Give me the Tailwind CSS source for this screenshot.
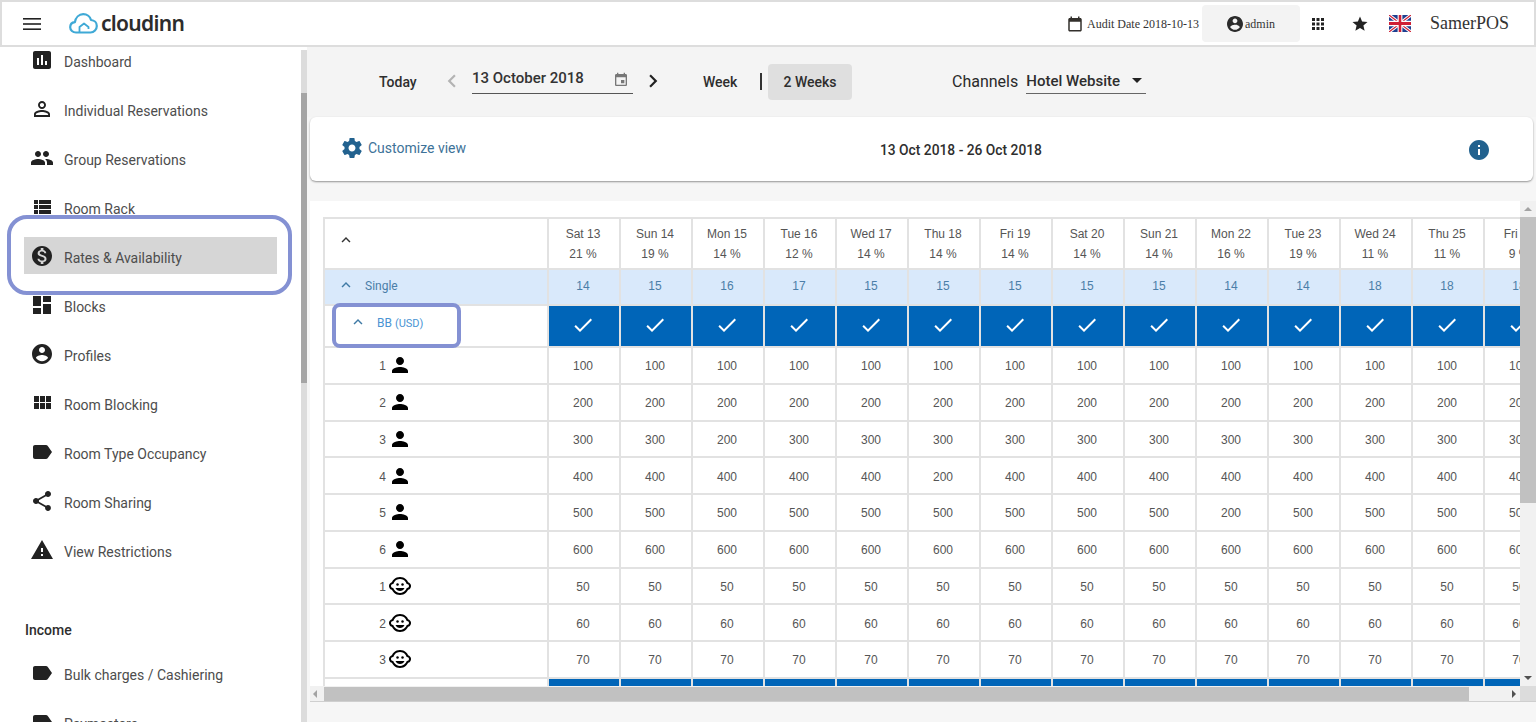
<!DOCTYPE html>
<html lang="en">
<head>
  <meta charset="UTF-8" />
  <meta name="viewport" content="width=device-width, initial-scale=1.0"/>
  <title>Rates &amp; Availability</title>
  <script src="https://cdn.jsdelivr.net/npm/@tailwindcss/browser@4"></script>
</head>
<body class="h-screen overflow-hidden flex flex-col bg-white font-['Roboto',sans-serif]">

  <!-- top bar -->
  <header class="h-[47px] shrink-0 flex items-center border-2 border-[#dddddd] border-b-2 bg-white">
    <svg class="ml-[21px] w-[18px] h-[12px]" viewBox="0 0 18 12" fill="#222"><rect width="18" height="1.6"/><rect y="5.2" width="18" height="1.6"/><rect y="10.4" width="18" height="1.6"/></svg>
    <div class="ml-[28px] flex items-center">
      <svg class="w-[29px] h-[21px]" viewBox="0 0 29 21" fill="none" stroke="#3fa9d6" stroke-width="2.2" stroke-linejoin="round"><path d="M7 19.5c-3.2 0-5.8-2.3-5.8-5.2 0-2.7 2-4.8 4.7-5.1C6.600 4.500 10 1.200 14.200 1.200c3.800 0 7 2.500 7.800 5.800 3.300.2 5.800 2.800 5.800 6 0 3.500-2.800 6.500-6.300 6.500z"/><path d="M10.500 19v-5l4.500-3.500 4.500 3.500v2" stroke-width="1.800"/></svg>
      <span class="ml-[3px] text-[21px] leading-none font-semibold tracking-[-0.7px] text-[#2c2c2c] font-['Noto_Sans',sans-serif]">cloudinn</span>
    </div>
    <div class="ml-auto flex items-center font-['Liberation_Serif',serif] text-[#333]">
      <svg class="w-[18px] h-[18px] mr-[3px]" viewBox="0 0 24 24" fill="#33302c"><path d="M19 4h-1V2h-2v2H8V2H6v2H5c-1.110 0-1.990.9-1.990 2L3 20c0 1.100.89 2 2 2h14c1.100 0 2-.9 2-2V6c0-1.100-.9-2-2-2zm0 16H5V9h14v11z"/></svg>
      <span class="text-[12px] w-[111px] whitespace-nowrap">Audit Date 2018-10-13</span>
      <div class="ml-[4px] w-[98px] h-[37px] bg-[#f3f3f3] rounded-[4px] flex items-center pl-[25px] text-[12px]">
        <svg class="w-[16px] h-[16px] mr-[2px]" viewBox="2 2 20 20" fill="#2b2b2b"><path d="M12 2C6.480 2 2 6.480 2 12s4.480 10 10 10 10-4.480 10-10S17.520 2 12 2zm0 3c1.660 0 3 1.340 3 3s-1.340 3-3 3-3-1.340-3-3 1.340-3 3-3zm0 14.200c-2.500 0-4.710-1.280-6-3.220.03-1.990 4-3.080 6-3.080 1.990 0 5.970 1.090 6 3.080-1.290 1.940-3.500 3.220-6 3.220z"/></svg>
        admin
      </div>
      <svg class="ml-[9px] w-[18px] h-[18px]" viewBox="0 0 24 24" fill="#222"><path d="M4 8h4V4H4v4zm6 12h4v-4h-4v4zm-6 0h4v-4H4v4zm0-6h4v-4H4v4zm6 0h4v-4h-4v4zm6-10v4h4V4h-4zm-6 4h4V4h-4v4zm6 6h4v-4h-4v4zm0 6h4v-4h-4v4z"/></svg>
      <svg class="ml-[24px] w-[18px] h-[18px]" viewBox="0 0 24 24" fill="#222"><path d="M12 17.270L18.180 21l-1.640-7.030L22 9.240l-7.190-.61L12 2 9.190 8.630 2 9.240l5.460 4.730L5.820 21z"/></svg>
      <svg class="ml-[20px] w-[22px] h-[17px]" viewBox="0 0 60 40" preserveAspectRatio="none">
        <rect width="60" height="40" fill="#1f3f8f"/>
        <path d="M0 0L60 40M60 0L0 40" stroke="#fff" stroke-width="8"/>
        <path d="M0 0L60 40M60 0L0 40" stroke="#cf1f35" stroke-width="3"/>
        <path d="M30 0V40M0 20H60" stroke="#fff" stroke-width="13"/>
        <path d="M30 0V40M0 20H60" stroke="#cf1f35" stroke-width="7"/>
      </svg>
      <span class="ml-[19px] mr-[25px] w-[79px] text-[18px] whitespace-nowrap text-[#333]">SamerPOS</span>
    </div>
  </header>

  <div class="flex flex-1 min-h-0">
    <!-- side menu -->
    <aside class="w-[307px] shrink-0 flex bg-white overflow-hidden">
      <nav id="menu" class="w-[301px] shrink-0 relative pl-[24px] text-[14px] text-[#4d4d4d]"></nav>
      <div class="w-[6px] mt-[3px] bg-[#dcdcdc]">
        <div class="mt-[43px] h-[290px] bg-[#a5a5a5]"></div>
      </div>
    </aside>

    <main class="flex-1 min-w-0 bg-[#f6f6f6] flex flex-col">
      <!-- date toolbar -->
      <div class="h-[70px] shrink-0 bg-[#f4f4f4] flex items-start text-[14px] text-[#2e2e2e] font-medium">
        <span class="ml-[72px] mt-[25px] w-[38px]">Today</span>
        <svg class="ml-[22px] mt-[21px] w-[26px] h-[26px]" viewBox="0 0 24 24" fill="#b3b3b3"><path d="M15.410 7.410L14 6l-6 6 6 6 1.410-1.410L10.830 12z"/></svg>
        <div class="ml-[7px] mt-[21px] w-[161px] h-[26px] border-b border-[#555] flex justify-between text-[#333]">
          <span class="font-medium text-[15px] leading-[21px]">13 October 2018</span>
          <svg class="mr-[4px] mt-[4px] w-[16px] h-[16px]" viewBox="0 0 24 24" fill="#777"><path d="M17 12h-5v5h5v-5zM16 1v2H8V1H6v2H5c-1.110 0-1.990.9-1.990 2L3 19c0 1.100.89 2 2 2h14c1.100 0 2-.9 2-2V5c0-1.100-.9-2-2-2h-1V1h-2zm3 18H5V8h14v11z"/></svg>
        </div>
        <svg class="ml-[7px] mt-[21px] w-[26px] h-[26px]" viewBox="0 0 24 24" fill="#222"><path d="M10 6L8.590 7.410 13.170 12l-4.580 4.590L10 18l6-6z"/></svg>
        <span class="ml-[37px] mt-[25px] w-[36px]">Week</span>
        <span class="ml-[21px] mt-[26px] w-[2px] h-[17px] bg-[#333]"></span>
        <span class="ml-[6px] mt-[17px] w-[84px] h-[36px] rounded-[4px] bg-[#dfdfdf] flex items-center justify-center">2 Weeks</span>
        <span class="ml-[100px] mt-[23px] text-[16px] font-normal text-[#2a2a2a]">Channels</span>
        <div class="ml-[8px] mt-[24px] w-[120px] h-[23px] border-b border-[#666] flex justify-between text-[15px] font-medium">
          <span class="leading-[20px]">Hotel Website</span>
          <span class="mt-[7px] mr-[4px] w-0 h-0 border-x-[5px] border-x-transparent border-t-[5px] border-t-[#222]"></span>
        </div>
      </div>

      <!-- card -->
      <div class="ml-[3px] mr-[3px] h-[64px] shrink-0 bg-white rounded-[6px] shadow-[0_1px_2px_rgba(0,0,0,0.4)] flex items-center relative">
        <svg class="ml-[30px] -mt-[3px] w-[24px] h-[24px]" viewBox="0 0 24 24" fill="#22628f"><path d="M19.430 12.980c.04-.32.07-.64.07-.98s-.03-.66-.07-.98l2.110-1.650c.19-.15.24-.42.12-.64l-2-3.460c-.12-.22-.39-.3-.61-.22l-2.490 1c-.52-.4-1.080-.73-1.690-.98l-.38-2.650C14.460 2.180 14.250 2 14 2h-4c-.25 0-.46.18-.49.42l-.38 2.650c-.61.25-1.170.59-1.690.98l-2.490-1c-.23-.09-.49 0-.61.22l-2 3.460c-.13.22-.07.49.12.64l2.110 1.650c-.04.32-.07.65-.07.98s.03.66.07.98l-2.110 1.650c-.19.15-.24.42-.12.64l2 3.460c.12.22.39.3.61.22l2.490-1c.52.4 1.080.73 1.690.98l.38 2.650c.03.24.24.42.49.42h4c.25 0 .46-.18.49-.42l.38-2.650c.61-.25 1.170-.59 1.690-.98l2.490 1c.23.09.49 0 .61-.22l2-3.460c.12-.22.07-.49-.12-.64l-2.110-1.650zM12 15.500c-1.930 0-3.500-1.570-3.500-3.500s1.570-3.500 3.500-3.500 3.500 1.570 3.500 3.500-1.570 3.500-3.500 3.500z"/></svg>
        <span class="ml-[4px] -mt-[1px] text-[14px] text-[#3d7298]">Customize view</span>
        <span class="absolute left-[570px] top-[25px] text-[13.8px] leading-[17px] font-medium text-[#2e2e2e]">13 Oct 2018 - 26 Oct 2018</span>
        <svg class="absolute right-[42px] top-[21px] w-[24px] h-[24px]" viewBox="0 0 24 24" fill="#22628f"><path d="M12 2C6.480 2 2 6.480 2 12s4.480 10 10 10 10-4.480 10-10S17.520 2 12 2zm1 15h-2v-6h2v6zm0-8h-2V7h2v2z"/></svg>
      </div>

      <!-- rates grid with its scrollbars -->
      <div class="mt-[20px] ml-[3px] w-[1226px] h-[501px] flex shrink-0 border-b border-[#cfcfcf]">
        <div class="w-[1210px] flex flex-col">
          <div class="h-[485px] bg-white overflow-hidden pl-[13px] pt-[16px]">
            <div id="grid" class="w-max border-t-2 border-l-2 border-[#e2e2e2] font-['Liberation_Sans',sans-serif] text-[12px] text-[#555]"></div>
          </div>
          <div class="h-[15px] bg-[#f1f1f1] flex items-center relative">
            <span class="ml-[3px] w-0 h-0 border-y-[4px] border-y-transparent border-r-[4px] border-r-[#a3a3a3]"></span>
            <div class="absolute left-[14px] top-[1px] w-[1145px] h-[14px] bg-[#c1c1c1]"></div>
            <span class="ml-auto mr-[4px] w-0 h-0 border-y-[4px] border-y-transparent border-l-[4px] border-l-[#505050]"></span>
          </div>
        </div>
        <div class="w-[16px] flex flex-col bg-[#f1f1f1]">
          <div class="h-[16px] flex items-center justify-center">
            <span class="w-0 h-0 border-x-[4px] border-x-transparent border-b-[4px] border-b-[#a3a3a3]"></span>
          </div>
          <div class="h-[286px] bg-[#c1c1c1]"></div>
          <div class="h-[183px] flex items-end justify-center pb-[6px]">
            <span class="w-0 h-0 border-x-[4px] border-x-transparent border-t-[4px] border-t-[#505050]"></span>
          </div>
          <div class="h-[15px] bg-[#dcdcdc]"></div>
        </div>
      </div>
    </main>
  </div>

  <!-- callouts drawn over the page -->
  <div class="absolute left-[7px] top-[215px] w-[285px] h-[80px] rounded-[20px] border-[4px] border-[#8491d3]"></div>
  <div class="absolute left-[332px] top-[303px] w-[129px] h-[45px] rounded-[8px] border-[4px] border-[#8491d3]"></div>

  <script>
    const paths = {
      poll: '<path d="M19 3H5c-1.100 0-2 .9-2 2v14c0 1.100.9 2 2 2h14c1.100 0 2-.9 2-2V5c0-1.100-.9-2-2-2zM9 17H7v-7h2v7zm4 0h-2V7h2v10zm4 0h-2v-4h2v4z"/>',
      personOutline: '<path d="M12 5.900c1.160 0 2.100.94 2.100 2.100s-.94 2.100-2.100 2.100S9.900 9.160 9.900 8s.94-2.100 2.100-2.100m0 9c2.970 0 6.100 1.460 6.100 2.100v1.100H5.900V17c0-.64 3.130-2.100 6.100-2.100M12 4C9.790 4 8 5.790 8 8s1.790 4 4 4 4-1.790 4-4-1.790-4-4-4zm0 9c-2.670 0-8 1.340-8 4v3h16v-3c0-2.660-5.330-4-8-4z"/>',
      people: '<path d="M16 11c1.660 0 2.990-1.340 2.990-3S17.660 5 16 5c-1.660 0-3 1.340-3 3s1.340 3 3 3zm-8 0c1.660 0 2.990-1.340 2.990-3S9.660 5 8 5C6.340 5 5 6.340 5 8s1.340 3 3 3zm0 2c-2.330 0-7 1.170-7 3.500V19h14v-2.500c0-2.330-4.670-3.500-7-3.500zm8 0c-.29 0-.62.02-.97.05 1.160.84 1.970 1.970 1.970 3.450V19h6v-2.500c0-2.330-4.670-3.500-7-3.500z"/>',
      viewList: '<path d="M4 14h4v-4H4v4zm0 5h4v-4H4v4zM4 9h4V5H4v4zm5 5h12v-4H9v4zm0 5h12v-4H9v4zM9 5v4h12V5H9z"/>',
      money: '<path d="M12 2C6.480 2 2 6.480 2 12s4.480 10 10 10 10-4.480 10-10S17.520 2 12 2zm1.410 16.090V20h-2.670v-1.930c-1.710-.36-3.160-1.460-3.270-3.400h1.960c.1 1.050.82 1.870 2.650 1.870 1.960 0 2.400-.98 2.400-1.590 0-.83-.44-1.610-2.670-2.140-2.480-.6-4.180-1.620-4.180-3.670 0-1.720 1.390-2.840 3.110-3.210V4h2.670v1.950c1.860.45 2.790 1.860 2.850 3.390H14.300c-.05-1.110-.64-1.870-2.220-1.870-1.500 0-2.400.68-2.400 1.640 0 .84.65 1.390 2.670 1.910s4.180 1.390 4.180 3.910c-.01 1.830-1.380 2.830-3.120 3.160z"/>',
      dashboard: '<path d="M3 13h8V3H3v10zm0 8h8v-6H3v6zm10 0h8V11h-8v10zm0-18v6h8V3h-8z"/>',
      account: '<path d="M12 2C6.480 2 2 6.480 2 12s4.480 10 10 10 10-4.480 10-10S17.520 2 12 2zm0 3c1.660 0 3 1.340 3 3s-1.340 3-3 3-3-1.340-3-3 1.340-3 3-3zm0 14.200c-2.500 0-4.710-1.280-6-3.220.03-1.990 4-3.080 6-3.080 1.990 0 5.970 1.090 6 3.080-1.290 1.940-3.500 3.220-6 3.220z"/>',
      viewModule: '<path d="M4 11h5V5H4v6zm0 7h5v-6H4v6zm6 0h5v-6h-5v6zm6 0h5v-6h-5v6zm-6-7h5V5h-5v6zm6-6v6h5V5h-5z"/>',
      label: '<path d="M17.630 5.840C17.270 5.330 16.670 5 16 5L5 5.010C3.900 5.010 3 5.900 3 7v10c0 1.100.9 1.990 2 1.990L16 19c.67 0 1.270-.33 1.630-.84L22 12l-4.370-6.160z"/>',
      share: '<path d="M18 16.080c-.76 0-1.440.3-1.960.77L8.910 12.700c.05-.23.09-.46.09-.7s-.04-.47-.09-.7l7.050-4.110c.54.5 1.250.81 2.040.81 1.660 0 3-1.340 3-3s-1.340-3-3-3-3 1.340-3 3c0 .24.04.47.09.7L8.040 9.810C7.500 9.310 6.790 9 6 9c-1.660 0-3 1.340-3 3s1.340 3 3 3c.79 0 1.500-.31 2.040-.81l7.120 4.160c-.05.21-.08.43-.08.65 0 1.610 1.310 2.920 2.920 2.920 1.610 0 2.920-1.310 2.920-2.920s-1.310-2.920-2.920-2.920z"/>',
      warning: '<path d="M1 21h22L12 2 1 21zm12-3h-2v-2h2v2zm0-4h-2v-4h2v4z"/>',
      person: '<path d="M12 12c2.210 0 4-1.790 4-4s-1.790-4-4-4-4 1.790-4 4 1.790 4 4 4zm0 2c-2.670 0-8 1.340-8 4v2h16v-2c0-2.660-5.330-4-8-4z"/>',
      child: '<circle cx="14.500" cy="10.500" r="1.250"/><circle cx="9.500" cy="10.500" r="1.250"/><path d="M22.940 12.660c.04-.21.06-.43.06-.66s-.02-.45-.06-.66c-.25-1.510-1.360-2.740-2.810-3.170-.53-1.120-1.280-2.100-2.190-2.910C16.360 3.850 14.280 3 12 3s-4.360.85-5.940 2.260c-.92.81-1.670 1.800-2.190 2.910-1.450.43-2.560 1.650-2.810 3.170-.04.21-.06.43-.06.66s.02.45.06.66c.25 1.510 1.360 2.740 2.810 3.170.52 1.110 1.270 2.090 2.170 2.890C7.620 20.140 9.710 21 12 21s4.380-.86 5.970-2.280c.9-.8 1.650-1.790 2.170-2.890 1.440-.43 2.550-1.650 2.800-3.170zM19 14c-.1 0-.19-.02-.29-.03-.2.67-.49 1.290-.86 1.860C16.600 17.740 14.450 19 12 19s-4.600-1.260-5.850-3.170c-.37-.57-.66-1.190-.86-1.860-.1.01-.19.03-.29.03-1.100 0-2-.9-2-2s.9-2 2-2c.1 0 .19.02.29.03.2-.67.49-1.290.86-1.860C7.400 6.260 9.550 5 12 5s4.600 1.260 5.850 3.170c.37.57.66 1.190.86 1.860.1-.01.19-.03.29-.03 1.100 0 2 .9 2 2s-.9 2-2 2z"/><path d="M7.500 14c.76 1.770 2.490 3 4.500 3s3.740-1.230 4.500-3h-9z"/>',
      check: '<path d="M9 16.170L4.830 12l-1.420 1.410L9 19 21 7l-1.410-1.410z"/>',
      up: '<path d="M12 8l-6 6 1.410 1.410L12 10.830l4.590 4.580L18 14z"/>'
    };

    const menu = [
      ["poll", "Dashboard"], ["personOutline", "Individual Reservations"], ["people", "Group Reservations"],
      ["viewList", "Room Rack"], ["money", "Rates & Availability"], ["dashboard", "Blocks"], ["account", "Profiles"],
      ["viewModule", "Room Blocking"], ["label", "Room Type Occupancy"], ["share", "Room Sharing"], ["warning", "View Restrictions"]
    ];
    const menuRow = ([icon, text]) => `
      <div class="h-[37px] mb-[12px] w-[253px] flex items-center pl-[6px] ${text.startsWith("Rates") ? "bg-[#d6d6d6]" : ""}">
        <svg class="w-[24px] h-[24px] shrink-0" viewBox="0 0 24 24" fill="#222">${paths[icon]}</svg>
        <span class="ml-[10px] pt-[6px] whitespace-nowrap">${text.replace("&", "&amp;")}</span>
      </div>`;
    document.getElementById("menu").innerHTML =
      `<div class="-mt-[6px]"></div>` + menu.map(menuRow).join("") +
      `<div class="mt-[52px] mb-[14px] ml-[1px] h-[20px] leading-[20px] font-medium text-[#2e2e2e]">Income</div>` +
      [["label", "Bulk charges / Cashiering"], ["label", "Paymasters"]].map(menuRow).join("");

    const days = ["Sat 13|21", "Sun 14|19", "Mon 15|14", "Tue 16|12", "Wed 17|14", "Thu 18|14", "Fri 19|14", "Sat 20|14", "Sun 21|14", "Mon 22|16", "Tue 23|19", "Wed 24|11", "Thu 25|11", "Fri 26|9"];
    const free = [14, 15, 16, 17, 15, 15, 15, 15, 15, 14, 14, 18, 18, 18];
    const cell = "w-[72px] shrink-0 border-l-2 border-[#e2e2e2] pr-[2px] flex flex-col items-center justify-center";
    const check = `<svg class="w-[24px] h-[24px]" viewBox="0 0 24 24" fill="#fff">${paths.check}</svg>`;
    const chevron = (color) => `<svg class="w-[18px] h-[18px]" viewBox="0 0 24 24" fill="${color}">${paths.up}</svg>`;

    let html = `<div class="h-[51px] flex border-b-2 border-[#e2e2e2]">
      <div class="w-[222px] shrink-0 flex items-center pl-[12px] pb-[7px]">${chevron("#333")}</div>
      ${days.map(d => `<div class="${cell} leading-[20px] pt-[1px]"><span class="whitespace-nowrap">${d.split("|")[0]}</span><span class="whitespace-nowrap">${d.split("|")[1]} %</span></div>`).join("")}
    </div>`;
    html += `<div class="h-[36px] flex border-b-2 border-[#e2e2e2] bg-[#d9e9fb] text-[#4b7ea8]">
      <div class="w-[222px] shrink-0 flex items-center pl-[12px] pb-[2px]"><span class="-mt-[2px]">${chevron("#3f7aa5")}</span><span class="ml-[10px] font-['Roboto',sans-serif]">Single</span></div>
      ${free.map(n => `<div class="${cell} pb-[2px]">${n}</div>`).join("")}
    </div>`;
    const blueRow = (h) => `<div class="${h} flex border-b-2 border-[#e2e2e2]">
      <div class="w-[222px] shrink-0 flex items-center pl-[24px] text-[#4a94d3] font-['Roboto',sans-serif] pb-[6px]"><span class="-mt-[2px]">${chevron("#3f7aa5")}</span><span class="ml-[10px]">BB <span class="text-[11px]">(USD)</span></span></div>
      ${days.map(() => `<div class="${cell} bg-[#0065b8] pb-[3px]">${check}</div>`).join("")}
    </div>`;
    html += blueRow("h-[42px]");

    const rows = [
      ["person", 1, 100], ["person", 2, 200], ["person", 3, 300], ["person", 4, 400], ["person", 5, 500], ["person", 6, 600],
      ["child", 1, 50], ["child", 2, 60], ["child", 3, 70]
    ];
    // a few days carry a different rate in the reference data
    const overrides = { "3|2": 200, "4|5": 200, "5|9": 200 };
    rows.forEach(([icon, n, value]) => {
      const values = days.map((_, i) => (icon === "person" && overrides[n + "|" + i]) || value);
      html += `<div class="h-[36.75px] flex border-b-2 border-[#e2e2e2]">
        <div class="w-[222px] shrink-0 flex items-center pt-[2px]">
          <span class="w-[61px] text-right">${n}</span>
          <svg class="ml-[2px] -mt-[2px] w-[24px] h-[24px]" viewBox="0 0 24 24" fill="#000">${paths[icon]}</svg>
        </div>
        ${values.map(v => `<div class="${cell} pt-[2px]">${v}</div>`).join("")}
      </div>`;
    });
    html += `<div class="h-[42px] flex">
      <div class="w-[222px] shrink-0"></div>
      ${days.map(() => `<div class="${cell} bg-[#0065b8]"></div>`).join("")}
    </div>`;
    document.getElementById("grid").innerHTML = html;
  </script>
</body>
</html>
